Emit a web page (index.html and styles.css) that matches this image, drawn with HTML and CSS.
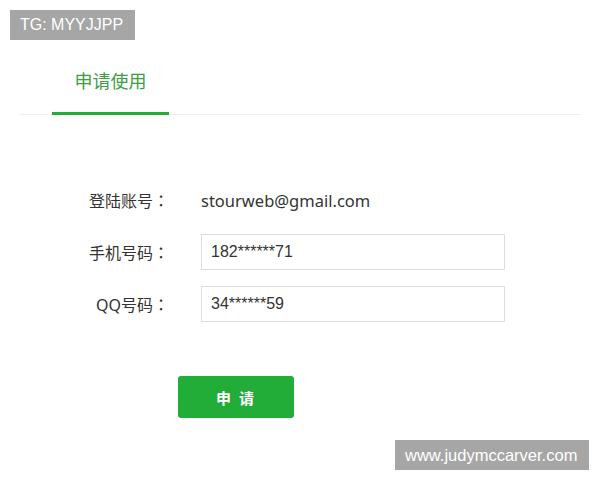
FILE: index.html
```html
<!DOCTYPE html>
<html lang="zh-CN">
<head>
    <meta charset="UTF-8">
    <meta name="viewport" content="width=device-width, initial-scale=1.0">
    <title>申请使用</title>
    <link rel="stylesheet" href="styles.css">
</head>
<body>
    <div class="tag tag-top">TG: MYYJJPP</div>

    <div class="tabs">
        <div class="tab active">申请使用</div>
    </div>

    <form class="apply-form">
        <div class="form-row">
            <label class="form-label">登陆账号<span class="colon" lang="zh-TW">：</span></label>
            <span class="form-value">stourweb@gmail.com</span>
        </div>
        <div class="form-row">
            <label class="form-label">手机号码<span class="colon" lang="zh-TW">：</span></label>
            <input type="text" class="form-input" value="182******71">
        </div>
        <div class="form-row">
            <label class="form-label">QQ号码<span class="colon" lang="zh-TW">：</span></label>
            <input type="text" class="form-input" value="34******59">
        </div>
        <div class="form-actions">
            <button type="button" class="btn">申 请</button>
        </div>
    </form>

    <div class="tag tag-bottom">www.judymccarver.com</div>
</body>
</html>
```

FILE: styles.css
```css
:root {
    --green: #22ac38;
    --tab-green: #3d9e45;
    --text-color: #333333;
    --border-color: #dddddd;
}

* {
    margin: 0;
    padding: 0;
    box-sizing: border-box;
    font-family: "Noto Sans", "Noto Sans CJK SC", sans-serif;
}

body {
    background-color: #ffffff;
    color: var(--text-color);
    width: 600px;
    height: 480px;
    overflow: hidden;
}

.tag {
    background-color: #a6a6a6;
    color: #ffffff;
    font-family: "Liberation Sans", sans-serif;
    font-size: 16px;
    height: 30px;
    line-height: 30px;
    padding: 0 10px;
}

.tag-top {
    width: 125px;
    margin: 10px 0 0 10px;
}

.tag-bottom {
    width: 194px;
    margin: 22px 0 0 395px;
    font-size: 16.5px;
}

.tabs {
    margin: 0 19px 0 20px;
    border-bottom: 1px solid #eeeeee;
    display: flex;
}

.tab {
    margin-left: 32px;
    margin-bottom: -1px;
    width: 117px;
    padding: 29px 0 19px;
    font-size: 18px;
    line-height: 24px;
    text-align: center;
    color: var(--tab-green);
}

.tab.active {
    border-bottom: 3px solid var(--green);
}

.apply-form {
    margin-top: 67px;
    display: flex;
    flex-direction: column;
    gap: 16px;
}

.form-row {
    display: grid;
    grid-template-columns: 169px 304px;
    column-gap: 32px;
    align-items: center;
    height: 36px;
}

.form-label {
    text-align: right;
    font-size: 16px;
    color: var(--text-color);
}

/* centred full-width colon, like YaHei */
.colon {
    font-family: "Noto Sans CJK TC", sans-serif;
}

.form-value {
    font-size: 16.5px;
    color: var(--text-color);
}

.form-input {
    height: 36px;
    border: 1px solid var(--border-color);
    padding: 0 9px;
    font-family: "Liberation Sans", sans-serif;
    font-size: 16px;
    color: var(--text-color);
    outline: none;
}

.form-actions {
    padding: 38px 0 0 178px;
}

.btn {
    width: 116px;
    height: 42px;
    border: none;
    border-radius: 3px;
    background-color: var(--green);
    color: #ffffff;
    font-size: 15px;
    font-weight: bold;
    letter-spacing: 2px;
    cursor: pointer;
}
```
